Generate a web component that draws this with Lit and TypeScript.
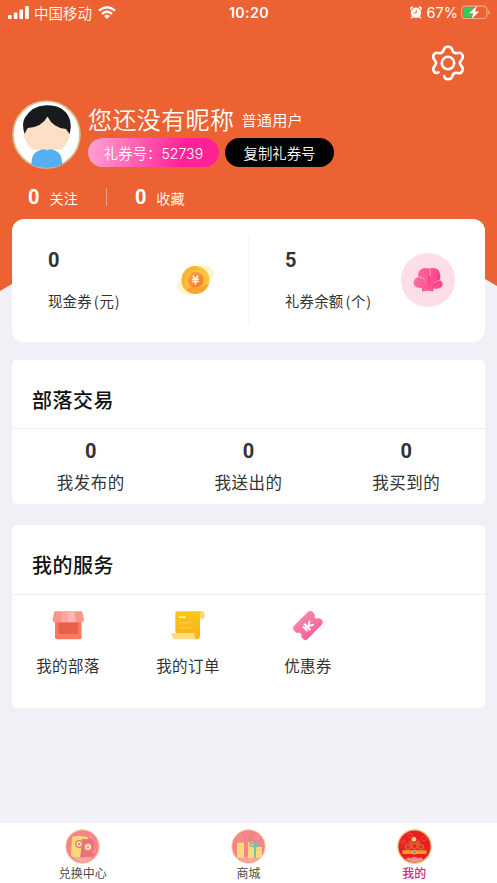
import { LitElement, html, css, svg } from "lit";
import { customElement, property } from "lit/decorators.js";

const signalIcon = html`<svg class="signal" viewBox="0 0 21 13" width="21" height="13" fill="#fff">
  <rect x="0" y="9" width="3.6" height="4" rx="1"/><rect x="5.8" y="6.4" width="3.6" height="6.6" rx="1"/>
  <rect x="11.4" y="3.4" width="3.6" height="9.6" rx="1"/><rect x="17" y="0" width="3.8" height="13" rx="1"/></svg>`;

const wifiIcon = html`<svg viewBox="0 0 18 13" width="18" height="13" fill="none" stroke="#fff" stroke-width="2.3">
  <path d="M1 4.6Q9 -2 17 4.6"/><path d="M4 7.9Q9 3.7 14 7.9"/><path d="M9 13L6.1 10Q9 7.7 11.9 10Z" fill="#fff" stroke="none"/></svg>`;

const alarmIcon = html`<svg viewBox="0 0 12 13" width="12" height="13">
  <path d="M.7 3.6Q.6 1.2 3.2 1M11.3 3.6Q11.4 1.2 8.8 1M2.5 10.8L1.2 12.2M9.5 10.8L10.8 12.2" fill="none" stroke="#fff" stroke-width="1.4"/>
  <circle cx="6" cy="6.8" r="5.2" fill="#fff"/><path d="M6.2 3.8V7H3.6" fill="none" stroke="#ec6233" stroke-width=".9"/></svg>`;

const batteryIcon = html`<svg viewBox="0 0 29 15" width="29" height="15">
  <rect x=".6" y="1.1" width="25.4" height="12.4" rx="3.6" fill="none" stroke="#f5a98d" stroke-width="1.1"/>
  <path d="M27.3 5.2Q28.8 5.6 28.8 7.3T27.3 9.4Z" fill="#f5a98d"/>
  <path d="M4.2 2.7H12.6L8.6 8H11.6L9.5 11.9H4.2Q2.3 11.9 2.3 10V4.6Q2.3 2.7 4.2 2.7Z" fill="#36cc59"/>
  <path d="M15.8 .8L8.2 8.3H12.3L10.4 14.2L18.1 6.4H14Z" fill="#fff"/></svg>`;

const gearIcon = html`<svg viewBox="0 0 34 36" width="34" height="36" fill="none" stroke="#fff" stroke-width="2.6" stroke-linecap="round" stroke-linejoin="round">
  <circle cx="17" cy="18" r="6.2"/>
  <path d="M7.6 27.3C5.5 28.6 3.2 27.7 2.5 25.5C1.7 23.2 2.6 22 4 20.5C5.3 19 5.3 17 4 15.5C2.6 14 1.6 12.7 2.4 10.5C3.2 8.2 5.2 7.4 7.3 7.9C10 8.5 12 7.5 12.6 5.2C13.2 2.7 14.7 1.8 17 1.8S20.8 2.7 21.4 5.2C22 7.5 24 8.5 26.7 7.9C28.8 7.4 30.8 8.2 31.6 10.5C32.4 12.7 31.4 14 30 15.5C28.7 17 28.7 19 30 20.5C31.4 22 32.3 23.3 31.5 25.5C30.7 27.8 28.8 28.6 26.7 28.1C24 27.5 22 28.5 21.4 30.8C20.8 33.3 19.3 34.2 17 34.2C14.8 34.2 13.5 33 13.2 31"/></svg>`;

const avatarImage = html`<svg viewBox="0 0 69 69" width="69" height="69">
  <circle cx="34.5" cy="34.5" r="33.5" fill="#fff" stroke="#d6bd8c" stroke-width="1.7"/>
  <path d="M13 35Q9 24 13 17.5Q20 6 34 5.3Q52 5 57.5 18.5Q60 26 57.5 34Z" fill="#191a1e"/>
  <path d="M11.5 37Q14 30 16 28Q30 27 35.5 16.5Q41 28 54 29Q57 32 58 37Q58 38.5 56.5 38.5Q54 48 47.5 49.7Q34.5 50.5 22 49.7Q16 48 13 38.5Q11.5 38.5 11.5 37Z" fill="#fddfc5"/>
  <path d="M19.5 65Q19 53.5 26 51Q32 48 34.7 50.5Q38 48 44 51Q50.5 53.5 50 65Q35 71 19.5 65Z" fill="#58aef3"/></svg>`;

const coinIcon = html`<svg class="coin" viewBox="0 0 42 34" width="42" height="34">
  <defs><linearGradient id="g" x1="0" y1="0" x2="0" y2="1"><stop offset="0" stop-color="#fccb3c"/><stop offset="1" stop-color="#f9bd35"/></linearGradient>
  <linearGradient id="o" x1="0" y1="0" x2="1" y2="1"><stop offset="0" stop-color="#fbaa4a"/><stop offset="1" stop-color="#f2752f"/></linearGradient></defs>
  <ellipse cx="30" cy="9" rx="10" ry="6.5" transform="rotate(25 30 9)" fill="#fff4cf"/>
  <ellipse cx="11" cy="25.5" rx="10" ry="6" transform="rotate(25 11 25.5)" fill="#fff4cf"/>
  <circle cx="20.5" cy="17" r="14" fill="url(#g)"/>
  <path d="M21 3A14 14 0 0 1 26 7C22 6 17 7 13.5 11C10 15 9.5 20 12.5 25Q11 26 12.7 28.6A14 14 0 0 1 6.5 17A14 14 0 0 1 21 3Z" fill="#f7b831"/>
  <path d="M12 28C13 23 16 23 20 24.5C25 25.5 30 22 33.5 21A14 14 0 0 1 12 28Z" fill="#f9a331"/>
  <circle cx="20.5" cy="16.7" r="8" fill="url(#o)"/>
  <path d="M17.8 12.8L20.5 16L23.2 12.8M17.2 16.2H23.8M17.2 18.5H23.8M20.5 16V21.5" fill="none" stroke="#fff" stroke-width="1.4"/></svg>`;

const shellIcon = html`<svg class="shell" viewBox="0 0 54 54" width="54" height="54">
  <defs><linearGradient id="s" x1="0" y1="0" x2="1" y2="0"><stop offset="0" stop-color="#ff6b9b"/><stop offset="1" stop-color="#fb438a"/></linearGradient></defs>
  <circle cx="27" cy="27" r="27" fill="#fddde6"/>
  <path d="M21 38.5V35Q14 35.5 12.8 31Q12 25.5 17.6 24Q16 18.5 20.5 16.2Q23 14 28 15.6Q36 13.8 38.4 18.8Q40.2 22.5 38.8 27.2Q42.5 29 41.5 32.2Q40 36.5 32.4 35.6V38.5Q26.5 36.8 21 38.5Z" fill="url(#s)"/>
  <path d="M28 16Q30.5 24 28 36Q26 25 28 16ZM38 19Q36 28 30.5 35Q38 30 39 27" fill="#f52f7b" opacity=".55"/>
  <path d="M29 16L28.8 23M17.8 24Q22 24.3 24.5 27.5M38.8 27.2Q36 27.6 33.5 30" fill="none" stroke="#ffb0cb" stroke-width=".8"/></svg>`;

const shopIcon = html`<svg viewBox="0 0 34 32" width="34" height="32">
  <rect x="4" y="9" width="26.5" height="20.2" rx="2" fill="#f67a61"/>
  <rect x="7.5" y="13" width="19.5" height="11" rx="1" fill="#e66048"/>
  <path d="M4.2 1.2H30.2Q31.2 1.2 31.6 2.5L33 10Q33 12 31 12H3.3Q1.3 12 1.5 10L3 2.5Q3.2 1.2 4.2 1.2Z" fill="#f99889"/>
  <path d="M11 1.2H17.2V12H9.5Z" fill="#fba99c"/><path d="M17.2 1.2H23.3L24.8 12H17.2Z" fill="#fcb9ad"/></svg>`;

const orderIcon = html`<svg viewBox="0 0 36 32" width="36" height="32">
  <defs><linearGradient id="d" x1="0" y1="0" x2="0" y2="1"><stop offset="0" stop-color="#fdc615"/><stop offset="1" stop-color="#f7b01e"/></linearGradient></defs>
  <path d="M28 1.2H32Q34.7 1.2 34.7 4V8.4H29Z" fill="#fcd972"/>
  <path d="M7.2 1.2H31Q30 2 30 4.5V25Q30.3 29.2 27 29.2Q12 29.5 7.5 26Q5.3 24 5.3 18V3.2Q5.3 1.2 7.2 1.2Z" fill="url(#d)"/>
  <path d="M1.4 23H24.5Q24.2 28.6 27 29.2H6Q1.4 28.8 1.4 23Z" fill="#fbdc83"/>
  <path d="M9 7.2H15.5" stroke="#fff" stroke-width="1.4"/><path d="M9 12.8H21.2M9 18H21.2" stroke="#fccf5d" stroke-width="1.1"/></svg>`;

const couponIcon = html`<svg viewBox="0 0 32 32" width="32" height="32">
  <defs><linearGradient id="c" x1="0" y1="0" x2=".8" y2="1"><stop offset="0" stop-color="#f694b3"/><stop offset="1" stop-color="#f95896"/></linearGradient></defs>
  <path d="M2 15.8L15.8 2Q18.2 0 20.8 2L22.2 3.5Q23 4.5 22.6 6Q22.4 8.5 25 8.6Q27.4 8 28.5 8.8L30.2 10.6Q31.7 12.5 29.9 14.4L15.8 29Q13.8 31.2 11.4 29.2L9.9 27.8Q9 26.8 9.4 25.2Q9.6 22.3 6.5 22.7Q4.8 23.2 3.7 22.2L2 20.5Q0 18.2 2 15.8Z" fill="url(#c)"/>
  <path d="M17.7 10.8L16.3 16.2L21.8 14.7M12.1 13.8L18.4 20M10.9 16.5L15.5 21.1M16.3 16.2L12.2 19.2" fill="none" stroke="#fff" stroke-width="1.9"/></svg>`;

const packetArt = svg`<circle cx="17.5" cy="17.5" r="16.7" fill="#f58489" stroke="#f7cfa4" stroke-width="1"/>
  <path d="M8 29Q12 25 17 29Q22 26 28 29Q18 37 8 29Z" fill="#f8a9a1"/>
  <path d="M7 8Q14 6 23 8V10Q17 13 15 28H8Q6 28 6 25.5Z" fill="#f9d978"/>
  <path d="M17 10L28.5 10.5V27Q22 29 15.5 28Z" fill="#ec7079"/>
  <circle cx="14" cy="15" r="3.3" fill="#fbdca0" stroke="#dc7979" stroke-width="1.2"/><circle cx="23" cy="18" r="3.6" fill="#fbe5ba" stroke="#e68d80" stroke-width="1"/>
  <circle cx="14" cy="15" r="1" fill="#d97675"/><circle cx="23" cy="18" r="1" fill="#d97675"/>
  <path d="M24 7L29 10M27 24L31 21" stroke="#f9a6a1" stroke-width="1"/>`;

const giftArt = svg`<circle cx="17.5" cy="17.5" r="16.7" fill="#f58489" stroke="#f7cfa4" stroke-width="1"/>
  <path d="M7 30Q17 25 28 30Q18 37 7 30Z" fill="#f8a49f"/><circle cx="9" cy="9" r="2.5" fill="none" stroke="#f79b99"/><circle cx="26" cy="8" r="2" fill="none" stroke="#f79b99"/>
  <path d="M6 13.5H13V29H6ZM17 13.5H23V29H17ZM23.5 18H31V29H23.5Z" fill="#f9da7b"/>
  <path d="M5.7 17H13.3M17 17H23M23.5 21H31" stroke="#f5c66b" stroke-width="1"/>
  <path d="M24 18V29" stroke="#72c4ad" stroke-width="2"/><path d="M24 18Q17 17 20 14Q23 14 24 18Q25 13 28 14Q30 17 24 18" fill="none" stroke="#72c4ad" stroke-width="1.5"/>`;

const hatArt = svg`<circle cx="17.5" cy="17.5" r="16.6" fill="#e92022" stroke="#eebd75" stroke-width="1.2"/>
  <g fill="none" stroke="#f04c42" stroke-width=".8"><circle cx="13" cy="6.5" r="2.3"/><circle cx="27" cy="9.5" r="2.5"/><circle cx="6" cy="13" r="2"/></g>
  <path d="M6 22Q7 11 17 11Q27.500 11 29 22Z" fill="#dc2e25"/>
  <g fill="none" stroke="#ee8c3f" stroke-width=".7"><circle cx="11" cy="18" r="2.5"/><circle cx="17.500" cy="17" r="2.8"/><circle cx="24" cy="18" r="2.5"/><circle cx="14" cy="13.500" r="1.5"/><circle cx="21" cy="13.500" r="1.5"/></g>
  <circle cx="17" cy="10.300" r="2.3" fill="#fbd886"/><path d="M5.300 21.300H29.500V25H5.300Z" fill="#f79922"/><circle cx="17.500" cy="23.300" r="1.700" fill="#4c9875" stroke="#ffe16c" stroke-width=".7"/>
  <path d="M9 30.500Q11 27 14 29.500Q17.500 26 21 29.500Q24 27 26.500 30.500Q18 36 9 30.500Z" fill="#f0958a"/>`;

@customElement("tab-item")
class TabItem extends LitElement {
  @property() label = "";
  @property({ attribute: false }) art: unknown;
  @property({ type: Boolean, reflect: true }) active = false;
  static styles = css`
    :host { display: flex; flex-direction: column; align-items: center; color: #4b4b4d; padding-top: 6px; }
    :host([active]) { color: #d22677; font-weight: 500; }
    .art { width: 35px; height: 35px; display: block; }
    .label { font-size: 12px; line-height: 18px; }
  `;
  render() {
    return html`<svg class="art" viewBox="0 0 35 35">${this.art}</svg><span class="label">${this.label}</span>`;
  }
}

@customElement("app-root")
class AppRoot extends LitElement {
  private trades = ["我发布的", "我送出的", "我买到的"];
  private services = [
    { label: "我的部落", icon: shopIcon },
    { label: "我的订单", icon: orderIcon },
    { label: "优惠券", icon: couponIcon },
  ];

  static styles = css`
    :host {
      display: flex; flex-direction: column; width: 100%; height: 883px; box-sizing: border-box; overflow: hidden;
      font-family: "Noto Sans CJK SC", sans-serif; color: #333; background: #f1f0f6; position: relative; z-index: 0;
    }
    svg { display: block; flex: none; }
    .backdrop {
      position: absolute; z-index: -1; inset: 0 0 auto; height: 291px; background: #ec6233;
      clip-path: polygon(0 0, 100% 0, 100% 286px, 485px 279px, 12px 284px, 0 291px);
    }
    .status { display: grid; grid-template-columns: 1fr auto 1fr; align-items: center; height: 25px; padding: 0 7px 0 8px; color: #fff; }
    .status-side { display: flex; align-items: center; height: 25px; }
    .status-end { justify-content: flex-end; }
    .carrier { font-size: 14.5px; font-weight: 350; margin: 0 6px 0 5px; line-height: 25px; }
    .time { font: 600 14.2px/25px Inter, sans-serif; letter-spacing: .4px; }
    .percent { font: 400 14.5px/25px Inter, sans-serif; margin: 0 3px 0 5px; }
    .toolbar { display: flex; justify-content: flex-end; padding: 20px 32px 0 0; height: 36px; }
    .profile { display: flex; gap: 7px; padding: 19px 12px 0; height: 70px; }
    .identity { display: flex; flex-direction: column; color: #fff; }
    .names { display: flex; height: 38px; align-items: center; gap: 7px; }
    .nickname { font-size: 24px; font-weight: 350; letter-spacing: .4px; line-height: 36px; }
    .level { font-size: 15.2px; font-weight: 350; letter-spacing: .2px; line-height: 36px; }
    .pills { display: flex; gap: 6px; }
    .pill { height: 29px; line-height: 29px; border-radius: 15px; font-size: 14.4px; text-align: center; white-space: nowrap; font-weight: 350; }
    .pill-number { width: 131px; background: linear-gradient(100deg, #ff9bcf 5%, #ff2196 72%); }
    .pill-number span { font-family: Inter, sans-serif; font-size: 14.1px; }
    .pill-copy { width: 109px; background: #000; }
    .follow { display: flex; align-items: center; color: #fff; height: 25px; padding: 14px 0 9.500px 28px; }
    .num { font-family: Roboto, sans-serif; font-weight: 700; font-size: 20px; line-height: 24px; }
    .follow-label { font-size: 14.2px; line-height: 24px; margin-left: 10px; padding-top: 2px; font-weight: 350; }
    .bar { width: 1px; height: 18px; background: #f3a183; margin: 0 28px; }
    .card { background: #fff; border-radius: 5px; margin: 0 12px; box-sizing: border-box; }
    .wallet { display: flex; align-items: center; height: 123px; border-radius: 12px; }
    .wallet-cell { flex: 1; display: flex; justify-content: space-between; align-items: center; box-sizing: border-box; height: 88px; padding: 0 30px 0 36px; }
    .wallet-cell + .wallet-cell { border-left: 1px solid #f3f3f4; }
    .amount { display: flex; flex-direction: column; gap: 17px; padding-top: 1px; }
    .amount-label { font-size: 14.4px; letter-spacing: .2px; line-height: 24px; white-space: nowrap; }
    .paren { letter-spacing: .8px; margin-left: 2px; }
    .title { height: 69px; box-sizing: border-box; border-bottom: 1px solid #eeeeef; padding: 13px 20px 0; line-height: 54px; font-size: 20px; font-weight: 500; letter-spacing: .5px; color: #111; }
    .trade { margin-top: 18px; height: 144px; }
    .trade-grid { display: grid; grid-template-columns: repeat(3, 1fr); padding-top: 10px; }
    .trade-cell { display: flex; flex-direction: column; align-items: center; gap: 6px; }
    .trade-label { font-size: 16.500px; letter-spacing: .5px; line-height: 26px; }
    .service { margin-top: 21px; height: 183px; }
    .service .title { height: 70px; }
    .service-grid { display: grid; grid-template-columns: 112px 128px 112px; padding-top: 15px; }
    .service-cell { display: flex; flex-direction: column; align-items: center; gap: 10px; }
    .service-label { font-size: 15.500px; letter-spacing: .4px; line-height: 26px; }
    .coin { margin-right: 1px; }
    .tabs { margin-top: auto; display: grid; grid-template-columns: repeat(3, 1fr); height: 60px; background: #fff; }
  `;

  render() {
    return html`
      <div class="backdrop"></div>
      <header class="status">
        <div class="status-side">${signalIcon}<span class="carrier">中国移动</span>${wifiIcon}</div>
        <span class="time">10:20</span>
        <div class="status-side status-end">${alarmIcon}<span class="percent">67%</span>${batteryIcon}</div>
      </header>
      <div class="toolbar">${gearIcon}</div>
      <section class="profile">
        ${avatarImage}
        <div class="identity">
          <div class="names"><span class="nickname">您还没有昵称</span><span class="level">普通用户</span></div>
          <div class="pills">
            <div class="pill pill-number">礼券号：<span>52739</span></div>
            <div class="pill pill-copy">复制礼券号</div>
          </div>
        </div>
      </section>
      <div class="follow">
        <span class="num">0</span><span class="follow-label">关注</span><i class="bar"></i>
        <span class="num">0</span><span class="follow-label">收藏</span>
      </div>
      <section class="card wallet">
        <div class="wallet-cell">
          <div class="amount"><span class="num">0</span><span class="amount-label">现金券<span class="paren">(元)</span></span></div>
          ${coinIcon}
        </div>
        <div class="wallet-cell">
          <div class="amount"><span class="num">5</span><span class="amount-label">礼券余额<span class="paren">(个)</span></span></div>
          ${shellIcon}
        </div>
      </section>
      <section class="card trade">
        <div class="title">部落交易</div>
        <div class="trade-grid">
          ${this.trades.map((t) => html`<div class="trade-cell"><span class="num">0</span><span class="trade-label">${t}</span></div>`)}
        </div>
      </section>
      <section class="card service">
        <div class="title">我的服务</div>
        <div class="service-grid">
          ${this.services.map((s) => html`<div class="service-cell">${s.icon}<span class="service-label">${s.label}</span></div>`)}
        </div>
      </section>
      <nav class="tabs">
        <tab-item label="兑换中心" .art=${packetArt}></tab-item>
        <tab-item label="商城" .art=${giftArt}></tab-item>
        <tab-item label="我的" .art=${hatArt} active></tab-item>
      </nav>
    `;
  }
}
